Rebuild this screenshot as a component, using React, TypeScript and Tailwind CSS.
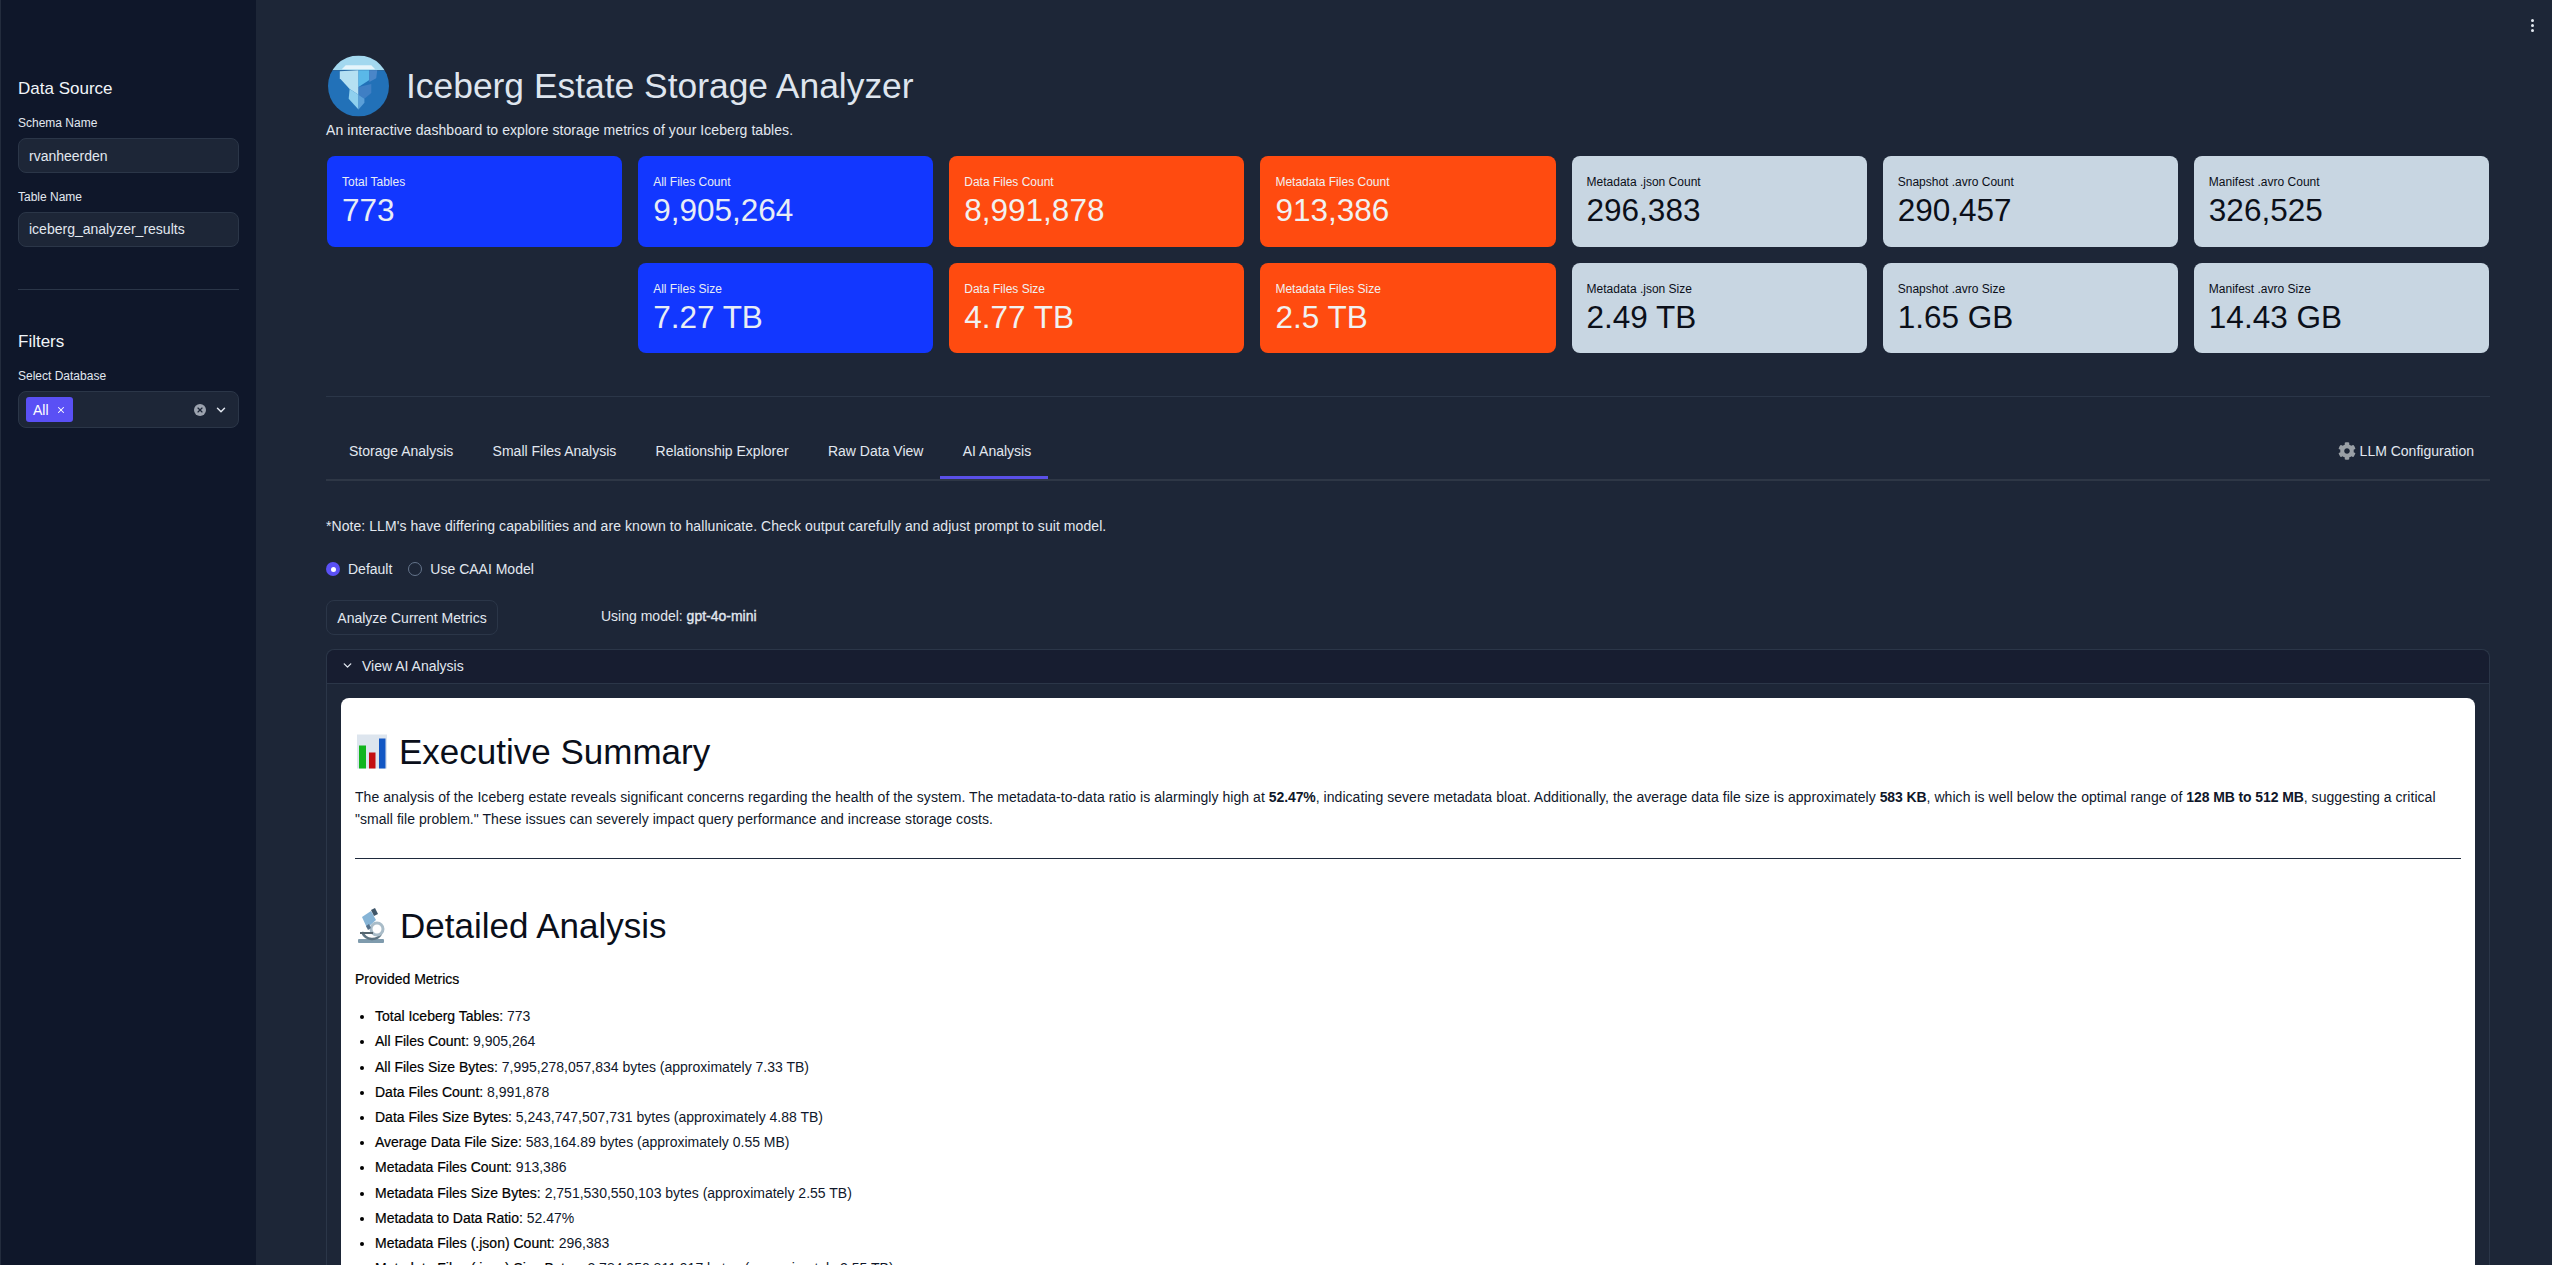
import { ChevronDown, X } from "lucide-react";
import { FaCog } from "react-icons/fa";

const metricCards = [
  { label: "Total Tables", value: "773", tone: "blue" },
  { label: "All Files Count", value: "9,905,264", tone: "blue" },
  { label: "Data Files Count", value: "8,991,878", tone: "orange" },
  { label: "Metadata Files Count", value: "913,386", tone: "orange" },
  { label: "Metadata .json Count", value: "296,383", tone: "gray" },
  { label: "Snapshot .avro Count", value: "290,457", tone: "gray" },
  { label: "Manifest .avro Count", value: "326,525", tone: "gray" },
  { label: "", value: "", tone: "none" },
  { label: "All Files Size", value: "7.27 TB", tone: "blue" },
  { label: "Data Files Size", value: "4.77 TB", tone: "orange" },
  { label: "Metadata Files Size", value: "2.5 TB", tone: "orange" },
  { label: "Metadata .json Size", value: "2.49 TB", tone: "gray" },
  { label: "Snapshot .avro Size", value: "1.65 GB", tone: "gray" },
  { label: "Manifest .avro Size", value: "14.43 GB", tone: "gray" },
];

const toneClass: Record<string, string> = {
  blue: "bg-[#1237ff] text-[#e8edf5]",
  orange: "bg-[#ff4b10] text-[#f1f1f1]",
  gray: "bg-[#c8d6e2] text-[#0b0f19]",
};

const tabs = ["Storage Analysis", "Small Files Analysis", "Relationship Explorer", "Raw Data View", "AI Analysis"];

const providedMetrics = [
  ["Total Iceberg Tables:", "773"],
  ["All Files Count:", "9,905,264"],
  ["All Files Size Bytes:", "7,995,278,057,834 bytes (approximately 7.33 TB)"],
  ["Data Files Count:", "8,991,878"],
  ["Data Files Size Bytes:", "5,243,747,507,731 bytes (approximately 4.88 TB)"],
  ["Average Data File Size:", "583,164.89 bytes (approximately 0.55 MB)"],
  ["Metadata Files Count:", "913,386"],
  ["Metadata Files Size Bytes:", "2,751,530,550,103 bytes (approximately 2.55 TB)"],
  ["Metadata to Data Ratio:", "52.47%"],
  ["Metadata Files (.json) Count:", "296,383"],
  ["Metadata Files (.json) Size Bytes:", "2,784,950,811,917 bytes (approximately 2.55 TB)"],
];

const IcebergLogo = () => (
  <svg viewBox="0 0 62 62" className="h-[62px] w-[61px] ml-[2px] shrink-0">
    <defs>
      <clipPath id="logoClip">
        <circle cx="31" cy="31" r="31" />
      </clipPath>
    </defs>
    <g clipPath="url(#logoClip)">
      <rect width="62" height="15" fill="#a3d8ef" />
      <rect y="15" width="62" height="47" fill="#2271b8" />
      <polygon points="14,14 18,10 44,10 48,14" fill="#e6f5fb" />
      <polygon points="12,16 31,15 31,40 22,34 12,23" fill="#b5e0f2" />
      <polygon points="31,15 42,15 42,25 31,32" fill="#5ab8e8" />
      <polygon points="42,15 50,15 49,23 42,27" fill="#4a86c8" />
      <polygon points="31,32 44,29 44,38 37,44 31,40" fill="#3f7fc4" />
      <polygon points="22,34 31,40 31,55 21,44" fill="#8fd0ee" />
      <polygon points="31,40 37,44 37,48 31,55" fill="#5a9fd8" />
    </g>
  </svg>
);

const BarChartEmoji = () => (
  <svg viewBox="0 0 30 34" className="h-[35px] w-[30px] shrink-0">
    <rect width="30" height="34" fill="#dde5ee" />
    <rect x="2" y="11" width="7" height="23" fill="#12b51e" />
    <rect x="12" y="18" width="6.5" height="16" fill="#c40f12" />
    <rect x="22" y="4" width="6.5" height="30" fill="#1257c4" />
  </svg>
);

const MicroscopeEmoji = () => (
  <svg viewBox="0 0 28 35" className="h-[35px] w-[28px] shrink-0">
    <rect x="1" y="31" width="26" height="4" rx="1" fill="#7f9bad" />
    <path d="M5 24 C9 33 20 33 24 26" fill="none" stroke="#5e7482" strokeWidth="2.5" />
    <circle cx="20" cy="21" r="6" fill="none" stroke="#a9bcc8" strokeWidth="3" />
    <polygon points="5,9 14,3 19,12 10,20" fill="#86b4d6" />
    <polygon points="9,18 12,16 14,20 11,22" fill="#55708a" />
    <polygon points="14,2 18,0 21,6 17,8" fill="#3e5568" />
    <rect x="3" y="24" width="13" height="2" fill="#55656f" />
  </svg>
);

const App = () => {
  return (
    <div className="relative flex h-[1265px] overflow-hidden bg-[#1d2637] font-['Liberation_Sans',Arial,sans-serif] text-[#e2e8f0]">
      <aside className="w-[256px] shrink-0 border-l border-[#232c3d] bg-[#0f172a] pl-[17px] pr-[17px] pt-[77px]">
        <h3 className="text-[17px] leading-6 text-[#f1f5f9]">Data Source</h3>
        <div className="mt-[13px] text-xs leading-[18px]">Schema Name</div>
        <div className="mt-[6px] flex h-[35px] items-center rounded-lg border border-[#2b3648] bg-[#1d2637] pl-[10px] text-sm">
          rvanheerden
        </div>
        <div className="mt-[15px] text-xs leading-[18px]">Table Name</div>
        <div className="mt-[6px] flex h-[35px] items-center rounded-lg border border-[#2b3648] bg-[#1d2637] pb-[2px] pl-[10px] text-sm">
          iceberg_analyzer_results
        </div>
        <div className="mt-[42px] h-px bg-[#2b3648]" />
        <h3 className="mt-[40px] text-[17px] leading-6 text-[#f1f5f9]">Filters</h3>
        <div className="mt-[13px] text-xs leading-[18px]">Select Database</div>
        <div className="mt-[6px] flex h-[37px] items-center rounded-lg border border-[#2b3648] bg-[#1d2637] pl-[7px] pr-[10px]">
          <span className="flex h-[25px] w-[47px] items-center gap-[7px] rounded-[3px] bg-[#5a50f5] pl-[7px] text-sm text-white">
            All
            <X size={10} strokeWidth={2.5} />
          </span>
          <span className="ml-auto flex h-3 w-3 items-center justify-center rounded-full bg-[#9ca3af] text-[#1d2637]">
            <X size={8} strokeWidth={3.5} />
          </span>
          <ChevronDown size={14} strokeWidth={2.5} className="ml-[8px] text-[#e2e8f0]" />
        </div>
      </aside>

      <main className="min-w-0 flex-1 pl-[70px] pr-[62px] pt-[55px]">
        <div className="flex h-[62px] items-center gap-[17px]">
          <IcebergLogo />
          <h1 className="text-[35.4px] leading-[44px] text-[#dfe5ee]">Iceberg Estate Storage Analyzer</h1>
        </div>
        <p className="mt-[3px] text-sm leading-5 tracking-[0.065px]">
          An interactive dashboard to explore storage metrics of your Iceberg tables.
        </p>

        <div className="ml-[1px] mr-[1px] mt-[16px] grid grid-cols-7 grid-rows-[91px_90px] gap-x-4 gap-y-4">
          {metricCards.map((card, i) =>
            card.tone === "none" ? (
              <div key={i} />
            ) : (
              <div key={i} className={`rounded-lg pl-[15px] pt-[17px] ${toneClass[card.tone]}`}>
                <div className="text-xs leading-[18px]">{card.label}</div>
                <div className="text-[31.5px] leading-[38px]">{card.value}</div>
              </div>
            )
          )}
        </div>

        <div className="mt-[43px] h-px bg-[#2b3648]" />

        <div className="mt-[24px] flex h-[60px] border-b-2 border-[#2e3746] text-sm">
          {tabs.map((tab) => (
            <div
              key={tab}
              className={`flex h-[58px] items-center border-b-[3px] pl-[23px] pr-[16.3px] pt-[5px] ${
                tab === "AI Analysis" ? "border-[#5a50e8]" : "border-transparent"
              }`}
            >
              {tab}
            </div>
          ))}
          <div className="ml-auto flex h-[58px] items-center gap-[4px] pr-[16px] pt-[2px]">
            <FaCog size={18} className="text-[#9aa0a6]" />
            LLM Configuration
          </div>
        </div>

        <p className="mt-[34px] text-sm leading-[22px] tracking-[0.065px]">
          *Note: LLM's have differing capabilities and are known to hallunicate. Check output carefully and adjust prompt to suit model.
        </p>

        <div className="mt-[22px] flex h-5 items-center text-sm">
          <span className="flex h-[14px] w-[14px] items-center justify-center rounded-full bg-[#5a50f5]">
            <span className="h-[5px] w-[5px] rounded-full bg-white" />
          </span>
          <span className="ml-[8px]">Default</span>
          <span className="ml-[16px] h-[14px] w-[14px] rounded-full border border-[#64748b]" />
          <span className="ml-[8px]">Use CAAI Model</span>
        </div>

        <div className="mt-[21px] flex items-center text-sm">
          <div className="flex h-[35px] w-[172px] items-center justify-center rounded-lg border border-[#2b3648]">
            Analyze Current Metrics
          </div>
          <div className="ml-[103px] pb-[3px]">
            Using model: <span className="[-webkit-text-stroke:0.35px_#e2e8f0]">gpt-4o-mini</span>
          </div>
        </div>

        <div className="mt-[14px] rounded-t-lg border-x border-t border-[#2b3648]">
          <div className="flex h-[34px] items-center rounded-t-lg border-b border-[#2b3648] bg-[#171d30] pb-[2px] pl-[14px] text-sm">
            <ChevronDown size={13} strokeWidth={2.5} />
            <span className="ml-[8px]">View AI Analysis</span>
          </div>
          <div className="px-[14px] pt-[14px]">
            <div className="rounded-lg bg-white px-[14px] pt-[32px] text-sm text-[#0f172a]">
              <h2 className="flex items-center gap-[12px] text-[35px] leading-[43px] text-[#0a0f1a]">
                <span className="ml-[2px]">
                  <BarChartEmoji />
                </span>
                Executive Summary
              </h2>
              <p className="mt-[13px] leading-[22.4px] tracking-[0.05px]">
                The analysis of the Iceberg estate reveals significant concerns regarding the health of the system. The metadata-to-data ratio is
                alarmingly high at <b className="tracking-[-0.1px]">52.47%</b>, indicating severe metadata bloat. Additionally, the average data file
                size is approximately <b className="tracking-[-0.1px]">583 KB</b>, which is well below the optimal range of{" "}
                <b className="tracking-[-0.1px]">128 MB to 512 MB</b>, suggesting a critical
                <br />
                "small file problem." These issues can severely impact query performance and increase storage costs.
              </p>
              <hr className="mt-[27px] border-[#1e293b]" />
              <h2 className="mt-[45px] flex items-center gap-[15px] text-[35px] leading-[43px] text-[#0a0f1a]">
                <span className="ml-[2px]">
                  <MicroscopeEmoji />
                </span>
                Detailed Analysis
              </h2>
              <p className="mt-[21px] leading-[22.4px] text-black [-webkit-text-stroke:0.2px_black]">Provided Metrics</p>
              <ul className="mt-[15px] list-disc pl-[20px] marker:text-black">
                {providedMetrics.map(([name, value]) => (
                  <li key={name} className="mb-[2.8px] leading-[22.4px]">
                    <span className="text-black [-webkit-text-stroke:0.2px_black]">{name}</span> {value}
                  </li>
                ))}
              </ul>
            </div>
          </div>
        </div>
      </main>

      <div className="absolute right-[18px] top-[19px] flex flex-col gap-[2px]">
        <span className="h-[3px] w-[3px] rounded-full bg-[#e2e8f0]" />
        <span className="h-[3px] w-[3px] rounded-full bg-[#e2e8f0]" />
        <span className="h-[3px] w-[3px] rounded-full bg-[#e2e8f0]" />
      </div>
    </div>
  );
};

export default App;
